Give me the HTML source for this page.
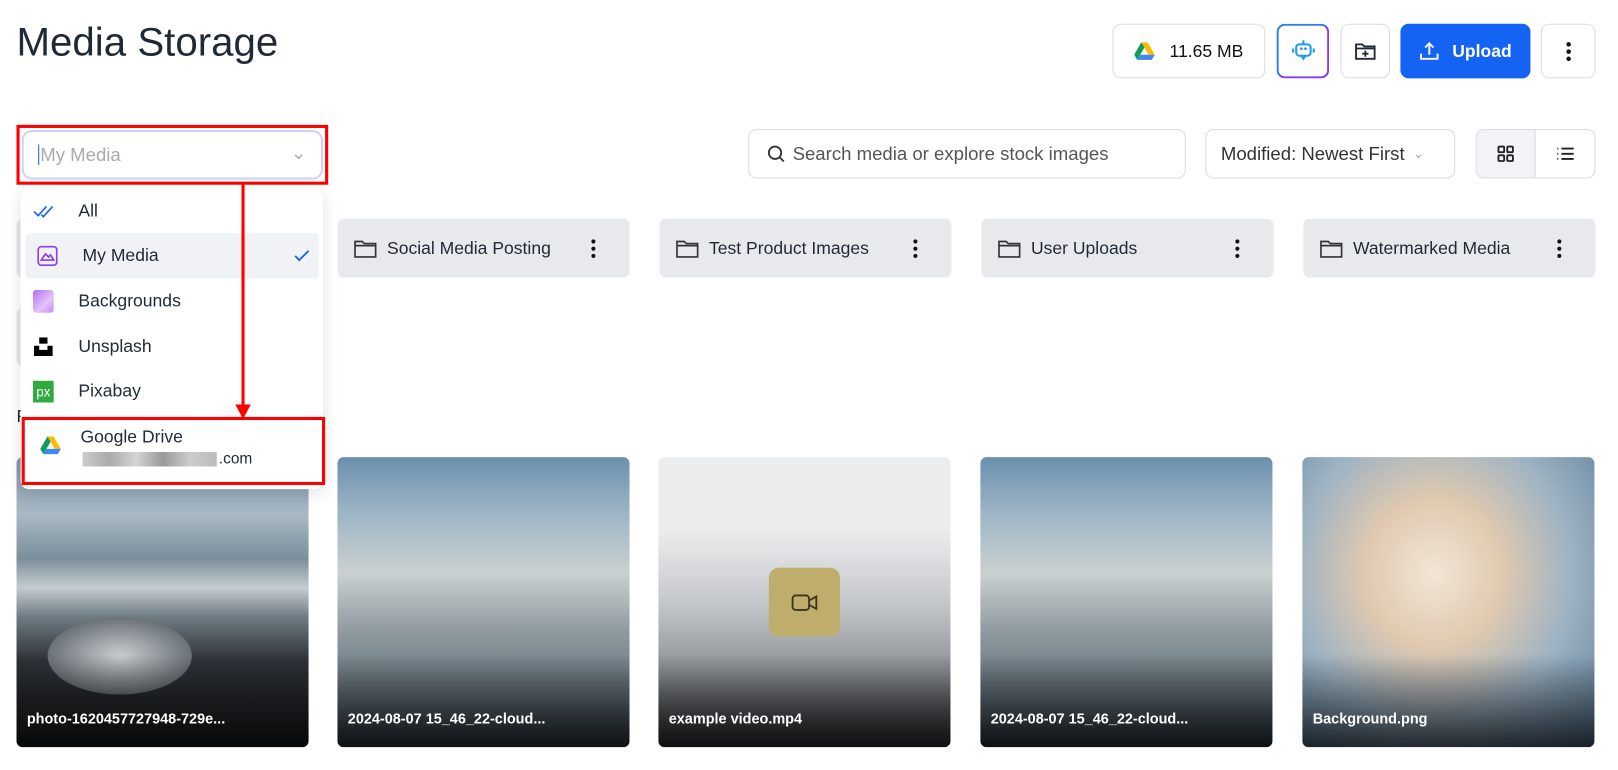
<!DOCTYPE html>
<html><head><meta charset="utf-8"><style>
*{box-sizing:border-box;margin:0;padding:0}
html,body{width:1618px;height:770px;overflow:hidden;background:#fff}
body{font-family:"Liberation Sans",sans-serif;color:#1f2937;position:relative}
#w{position:absolute;left:0;top:0;width:1568px;height:746px;transform:scale(1.032);transform-origin:0 0}
.a{position:absolute}
.btn{position:absolute;border:1px solid #d9dce1;border-radius:8px;background:#fff;display:flex;align-items:center;justify-content:center}
.folder{position:absolute;top:212px;height:57px;width:283px;background:#e8e9ec;border-radius:6px;display:flex;align-items:center;padding-left:16px;font-size:17px;color:#1f2937}
.folder svg{margin-right:10px}
.folder .dots{position:absolute;right:22px;top:19px}
.card{position:absolute;top:443px;width:283px;height:281px;border-radius:6px;overflow:hidden}
.card .lbl{position:absolute;left:10px;bottom:20px;color:#fff;font-weight:bold;font-size:14px}
.card .sh{position:absolute;left:0;right:0;bottom:0;height:90px;background:linear-gradient(transparent,rgba(0,0,0,.75))}
.sky{background:linear-gradient(180deg,#6a8fae 0%,#9fb6c7 20%,#c9d0d0 40%,#8f9aa0 60%,#5e6b75 85%,#3a4550 100%)}
.item{position:absolute;left:5px;width:284px;height:44px;display:flex;align-items:center;font-size:17px;color:#1f2937}
.item .ic{width:20px;margin-left:12px;margin-right:24px;display:flex;justify-content:center}
</style></head><body><div id="w">
<div class="a" style="left:16px;top:20px;font-size:39px;color:#1f2937">Media Storage</div>

<div class="btn" style="left:1078px;top:23px;width:148px;height:53px;font-size:17px;color:#111"><svg width="20" height="18" viewBox="0 0 20 18" style="margin-right:14px"><path d="M7 0h6l7 12h-6z" fill="#fbbc04"/><path d="M7 0l3 5-7 12-3-5z" fill="#0f9d58"/><path d="M3 17l3-5h14l-3 5z" fill="#4285f4"/></svg>11.65 MB</div>
<div class="btn" style="left:1237px;top:23px;width:51px;height:53px;border:2px solid;border-color:#2f7ff0 #8b3cf0 #8b3cf0 #2f7ff0"><svg width="26" height="26" viewBox="0 0 26 26" fill="none" stroke="#1e9bf0" stroke-width="2"><rect x="6" y="6" width="14" height="11" rx="3"/><path d="M13 2v4M3 10v4M23 10v4M10 11l1-1 1 1M14 11l1-1 1 1M11 17l2 3 2-3"/></svg></div>
<div class="btn" style="left:1299px;top:23px;width:48px;height:53px"><svg width="22" height="20" viewBox="0 0 22 20" fill="none" stroke="#1f2937" stroke-width="1.8"><path d="M2 3h6l2 2h10v12H2z"/><path d="M2 7h18M11 9v6M8 12h6"/></svg></div>
<div class="btn" style="left:1357px;top:23px;width:126px;height:53px;background:#1463f3;border-color:#1463f3;color:#fff;font-size:17px;font-weight:bold"><svg width="20" height="20" viewBox="0 0 20 20" fill="none" stroke="#fff" stroke-width="1.8" style="margin-right:12px"><path d="M10 13V2M6 6l4-4 4 4M2 12v5h16v-5"/></svg>Upload</div>
<div class="btn" style="left:1493px;top:23px;width:53px;height:53px"><svg width="6" height="20"><circle cx="3" cy="3" r="2.2" fill="#111"/><circle cx="3" cy="10" r="2.2" fill="#111"/><circle cx="3" cy="17" r="2.2" fill="#111"/></svg></div>

<div class="btn" style="left:725px;top:125px;width:424px;height:48px;justify-content:flex-start;padding-left:16px;color:#555;font-size:18px"><svg width="20" height="20" viewBox="0 0 20 20" fill="none" stroke="#333" stroke-width="1.8" style="margin-right:6px"><circle cx="9" cy="9" r="6"/><path d="M13.5 13.5l4 4"/></svg>Search media or explore stock images</div>
<div class="btn" style="left:1168px;top:125px;width:242px;height:48px;font-size:18px;color:#333;justify-content:flex-start;padding-left:14px">Modified: Newest First<span style="color:#aaa;margin-left:8px;font-size:13px">&#8964;</span></div>
<div class="btn" style="left:1430px;top:125px;width:116px;height:48px;overflow:hidden;justify-content:flex-start">
<div style="width:57px;height:100%;background:#f2f3f6;border-right:1px solid #d9dce1;display:flex;align-items:center;justify-content:center"><svg width="16" height="16" fill="none" stroke="#222" stroke-width="1.8"><rect x="1" y="1" width="5.5" height="5.5" rx="1"/><rect x="9.5" y="1" width="5.5" height="5.5" rx="1"/><rect x="1" y="9.5" width="5.5" height="5.5" rx="1"/><rect x="9.5" y="9.5" width="5.5" height="5.5" rx="1"/></svg></div>
<div style="flex:1;display:flex;align-items:center;justify-content:center"><svg width="17" height="14" stroke="#222" stroke-width="1.8"><path d="M5 2h12M5 7h12M5 12h12M1 2h1M1 7h1M1 12h1"/></svg></div></div>

<div class="folder" style="left:16px;width:40px"></div>
<div class="a" style="left:16px;top:298px;width:40px;height:57px;background:#e8e9ec;border-radius:6px"></div>
<div class="a" style="left:16px;top:394px;font-size:17px">R</div>
<div class="folder" style="left:327px"><svg width="22" height="18" fill="none" stroke="#333" stroke-width="1.6"><path d="M1 2h7l2 2h11v13H1z"/><path d="M1 6h20"/></svg>Social Media Posting<svg class="dots" width="6" height="20"><circle cx="3" cy="3" r="2" fill="#111"/><circle cx="3" cy="10" r="2" fill="#111"/><circle cx="3" cy="17" r="2" fill="#111"/></svg></div>
<div class="folder" style="left:639px"><svg width="22" height="18" fill="none" stroke="#333" stroke-width="1.6"><path d="M1 2h7l2 2h11v13H1z"/><path d="M1 6h20"/></svg>Test Product Images<svg class="dots" width="6" height="20"><circle cx="3" cy="3" r="2" fill="#111"/><circle cx="3" cy="10" r="2" fill="#111"/><circle cx="3" cy="17" r="2" fill="#111"/></svg></div>
<div class="folder" style="left:951px"><svg width="22" height="18" fill="none" stroke="#333" stroke-width="1.6"><path d="M1 2h7l2 2h11v13H1z"/><path d="M1 6h20"/></svg>User Uploads<svg class="dots" width="6" height="20"><circle cx="3" cy="3" r="2" fill="#111"/><circle cx="3" cy="10" r="2" fill="#111"/><circle cx="3" cy="17" r="2" fill="#111"/></svg></div>
<div class="folder" style="left:1263px"><svg width="22" height="18" fill="none" stroke="#333" stroke-width="1.6"><path d="M1 2h7l2 2h11v13H1z"/><path d="M1 6h20"/></svg>Watermarked Media<svg class="dots" width="6" height="20"><circle cx="3" cy="3" r="2" fill="#111"/><circle cx="3" cy="10" r="2" fill="#111"/><circle cx="3" cy="17" r="2" fill="#111"/></svg></div>

<div class="card" style="left:16px;background:linear-gradient(180deg,#7e95ab 0%,#a9b8c4 20%,#7a8e9c 35%,#c4ccd0 45%,#6f7c84 55%,#2e3338 70%,#1e2124 100%)"><div class="a" style="left:30px;top:155px;width:140px;height:75px;border-radius:50%;background:radial-gradient(#c8cdd0,#6b7278 70%,transparent 72%)"></div><div class="sh"></div><div class="lbl">photo-1620457727948-729e...</div></div>
<div class="card sky" style="left:327px"><div class="sh"></div><div class="lbl">2024-08-07 15_46_22-cloud...</div></div>
<div class="card" style="left:638px;background:linear-gradient(180deg,#ebecee 0%,#ebecee 25%,#c5c8cb 50%,#8a8f94 75%,#3a3d40 100%)"><div class="a" style="left:107px;top:107px;width:69px;height:67px;border-radius:10px;background:#bfae6b;display:flex;align-items:center;justify-content:center"><svg width="28" height="20" fill="none" stroke="#3b3520" stroke-width="1.8"><rect x="2" y="3" width="16" height="14" rx="3"/><path d="M18 8l7-4v12l-7-4"/></svg></div><div class="sh"></div><div class="lbl">example video.mp4</div></div>
<div class="card sky" style="left:950px"><div class="sh"></div><div class="lbl">2024-08-07 15_46_22-cloud...</div></div>
<div class="card" style="left:1262px;background:radial-gradient(ellipse at 45% 40%,#f2e6d6 0%,#e0c9b0 30%,#9fb3c3 60%,#5b7e9c 100%)"><div class="sh"></div><div class="lbl">Background.png</div></div>

<div class="a" style="left:16px;top:121px;width:302px;height:58px;border:3px solid #f00"></div>
<div class="a" style="left:21px;top:126px;width:292px;height:48px;border:2px solid #c8d6f5;border-radius:10px;background:#fff;font-size:18px;color:#aaa;padding:12px 0 0 14px"><span style="border-left:1.5px solid #1463f3;padding-left:1px">My Media</span><span style="position:absolute;right:14px;top:10px;color:#aaa">&#8964;</span></div>
<div class="a" style="left:20px;top:184px;width:293px;height:290px;background:#fff;border-radius:8px;box-shadow:0 4px 16px rgba(0,0,0,.12)"></div>
<div class="item" style="left:20px;top:183px"><span class="ic"><svg width="24" height="14" fill="none" stroke="#1463f3" stroke-width="1.6"><path d="M1 7l4 4 8-9M8 10l2 2 9-10"/></svg></span>All</div>
<div class="item" style="left:25px;top:226px;background:#f1f2f5;border-radius:4px"><span class="ic" style="margin-left:11px"><svg width="20" height="20" fill="none" stroke="#8b3cf0" stroke-width="1.6"><rect x="1" y="1" width="18" height="18" rx="3"/><path d="M4 14l4-6 3 3 2-2 3 5z"/></svg></span>My Media<svg style="position:absolute;right:8px" width="16" height="12" fill="none" stroke="#1463f3" stroke-width="1.8"><path d="M1 6l4 4 9-9"/></svg></div>
<div class="item" style="left:20px;top:270px"><span class="ic"><span style="width:22px;height:22px;border-radius:3px;background:linear-gradient(135deg,#b06cf5,#e3c3fb 60%,#c98cf7)"></span></span>Backgrounds</div>
<div class="item" style="left:20px;top:314px"><span class="ic"><svg width="20" height="20"><rect x="6" y="1" width="8" height="6" fill="#000"/><path d="M1 9h5v4h8V9h5v10H1z" fill="#000"/></svg></span>Unsplash</div>
<div class="item" style="left:20px;top:357px"><span class="ic"><span style="width:21px;height:21px;background:#2eab3f;color:#fff;font-size:13px;line-height:21px;text-align:center">px</span></span>Pixabay</div>
<div class="a" style="left:21px;top:404px;width:294px;height:66px;border:3px solid #f00;background:#fff"></div>
<svg class="a" style="left:38px;top:423px" width="22" height="18" viewBox="0 0 20 18"><path d="M7 0h6l7 12h-6z" fill="#fbbc04"/><path d="M7 0l3 5-7 12-3-5z" fill="#0f9d58"/><path d="M3 17l3-5h14l-3 5z" fill="#4285f4"/></svg>
<div class="a" style="left:78px;top:414px;font-size:17px">Google Drive</div>
<div class="a" style="left:80px;top:438px;width:130px;height:14px;background:linear-gradient(90deg,#ccc,#aaa,#d4d4d4,#999,#ccc,#bbb)"></div>
<div class="a" style="left:212px;top:436px;font-size:15px">.com</div>
<div class="a" style="left:234px;top:178px;width:3px;height:216px;background:#f00"></div>
<svg class="a" style="left:228px;top:392px" width="15" height="14"><path d="M0 0h15L7.5 14z" fill="#f00"/></svg>
</div></body></html>
